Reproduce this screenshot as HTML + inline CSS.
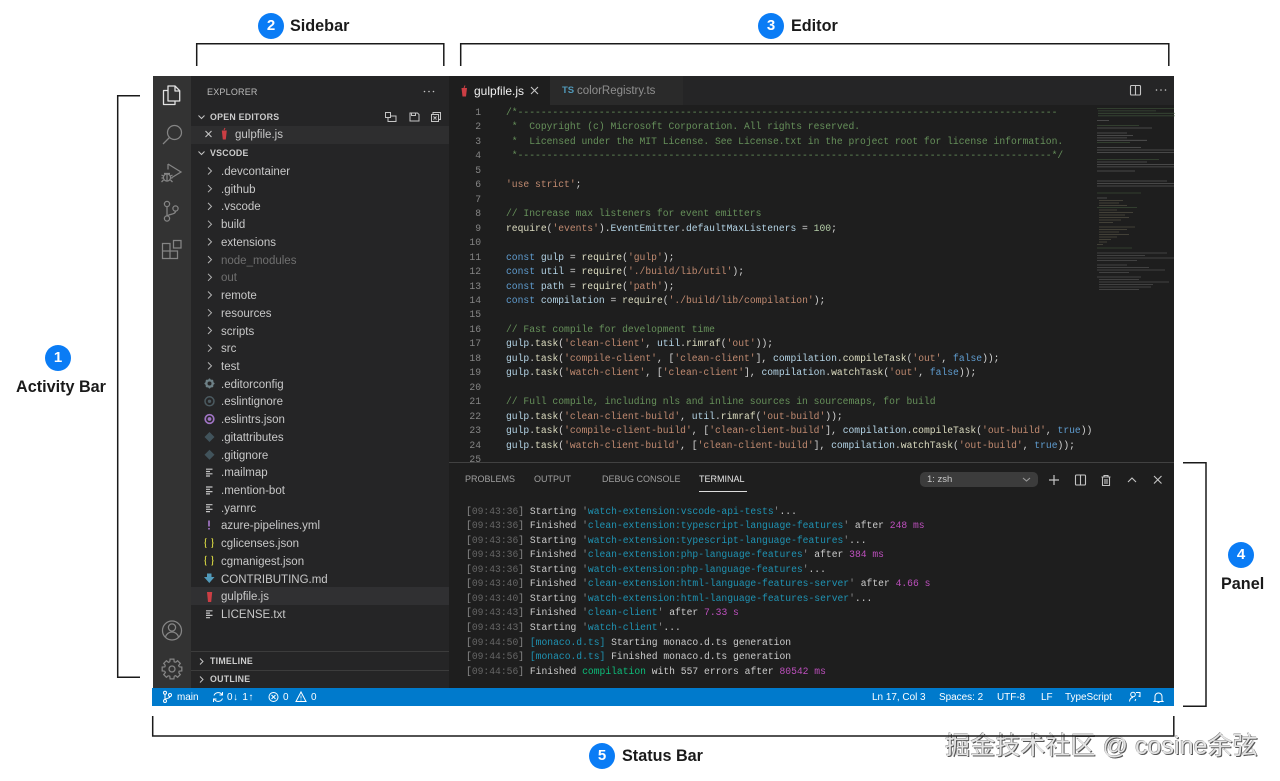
<!DOCTYPE html>
<html><head><meta charset="utf-8"><title>VS Code UI</title>
<style>
html,body{margin:0;padding:0;background:#fff;width:1280px;height:781px;overflow:hidden}
body{position:relative;font-family:"Liberation Sans","Noto Sans CJK SC",sans-serif}
div{position:absolute;box-sizing:border-box}
.t{white-space:pre;height:18px;line-height:18px}
.f{font-size:11.5px;color:#c8c8c8;left:221px;margin-top:1px}
.h{font-size:8.8px;font-weight:bold;color:#ccc;left:210px;letter-spacing:.25px}
.p{font-size:9px;color:#a0a0a0;top:470px}
.s{font-size:9.95px;color:#fff;top:689px}
.l{font-size:16.2px;font-weight:bold;color:#1a1a1a;height:26px;line-height:26px;white-space:pre}
.n{width:26px;height:26px;border-radius:50%;background:#0a7cf5;color:#fff;font-weight:bold;font-size:15px;line-height:26px;text-align:center}
pre{margin:0;font-family:"Liberation Mono",monospace;font-size:9.68px;white-space:pre}
.c{color:#66905a}.q{color:#c08a70}.k{color:#5f9ccf}.v{color:#b4d4e6}.u{color:#dcdcc0}.m{color:#b5cea8}
.g{color:#666}.b{color:#8a8a8a}.y{color:#1f93b3}.e{color:#bc4fbc}.r{color:#0dbc79}
svg{position:absolute;left:0;top:0}
</style></head><body>

<div style="left:153px;top:76px;width:1021px;height:630px;background:#1e1e1e"></div>
<div style="left:153px;top:76px;width:38px;height:612px;background:#333"></div>
<div style="left:191px;top:76px;width:258px;height:612px;background:#252526"></div>
<div style="left:449px;top:76px;width:725px;height:29px;background:#252526"></div>
<div style="left:449px;top:76px;width:101px;height:29px;background:#1e1e1e"></div>
<div style="left:550px;top:76px;width:133px;height:29px;background:#2a2a2a"></div>
<div style="left:191px;top:126px;width:258px;height:18px;background:#2e2e2f"></div>
<div style="left:191px;top:587px;width:258px;height:18px;background:#303032"></div>
<div style="left:191px;top:651px;width:258px;height:1px;background:#3c3c3c"></div>
<div style="left:191px;top:670px;width:258px;height:1px;background:#3c3c3c"></div>
<div style="left:152px;top:688px;width:1022px;height:18px;background:#007acc"></div>

<!-- sidebar text -->
<div class="t" style="left:207px;top:83px;font-size:9px;color:#bbb;letter-spacing:.2px">EXPLORER</div>
<div class="t h" style="top:108px">OPEN EDITORS</div>
<div class="t f" style="left:235px;top:126px;margin-top:0">gulpfile.js</div>
<div class="t h" style="top:144px">VSCODE</div>
<div class="t f" style="top:162px">.devcontainer</div>
<div class="t f" style="top:179.7px">.github</div>
<div class="t f" style="top:197.4px">.vscode</div>
<div class="t f" style="top:215.2px">build</div>
<div class="t f" style="top:232.9px">extensions</div>
<div class="t f" style="top:250.6px;color:#6f6f6f">node_modules</div>
<div class="t f" style="top:268.3px;color:#6f6f6f">out</div>
<div class="t f" style="top:286px">remote</div>
<div class="t f" style="top:303.8px">resources</div>
<div class="t f" style="top:321.5px">scripts</div>
<div class="t f" style="top:339.2px">src</div>
<div class="t f" style="top:356.9px">test</div>
<div class="t f" style="top:374.6px">.editorconfig</div>
<div class="t f" style="top:392.4px">.eslintignore</div>
<div class="t f" style="top:410.1px">.eslintrs.json</div>
<div class="t f" style="top:427.8px">.gitattributes</div>
<div class="t f" style="top:445.5px">.gitignore</div>
<div class="t f" style="top:463.2px">.mailmap</div>
<div class="t f" style="top:481px">.mention-bot</div>
<div class="t f" style="top:498.7px">.yarnrc</div>
<div class="t f" style="top:516.4px">azure-pipelines.yml</div>
<div class="t f" style="top:534.1px">cglicenses.json</div>
<div class="t f" style="top:551.8px">cgmanigest.json</div>
<div class="t f" style="top:569.6px">CONTRIBUTING.md</div>
<div class="t f" style="top:587.3px">gulpfile.js</div>
<div class="t f" style="top:605px">LICENSE.txt</div>
<div class="t h" style="top:652px">TIMELINE</div>
<div class="t h" style="top:670px">OUTLINE</div>

<!-- tabs -->
<div class="t" style="left:474px;top:82px;font-size:12px;color:#f0f0f0">gulpfile.js</div>
<div class="t" style="left:562px;top:82px;font-size:9.5px;font-weight:bold;color:#519aba">TS</div>
<div class="t" style="left:577px;top:82px;font-size:11.5px;color:#8f8f8f">colorRegistry.ts</div>

<!-- gutter -->
<pre style="position:absolute;left:450px;top:105.7px;width:31px;height:356.3px;overflow:hidden;text-align:right;color:#858585;line-height:14.48px">1
2
3
4
5
6
7
8
9
10
11
12
13
14
15
16
17
18
19
20
21
22
23
24
25</pre>

<!-- code -->
<div style="left:506px;top:105.7px;width:589px;height:356px;overflow:hidden">
<pre style="line-height:14.48px"><span class="c">/*---------------------------------------------------------------------------------------------</span>
<span class="c"> *  Copyright (c) Microsoft Corporation. All rights reserved.</span>
<span class="c"> *  Licensed under the MIT License. See License.txt in the project root for license information.</span>
<span class="c"> *--------------------------------------------------------------------------------------------*/</span>

<span class="q">'use strict'</span><span style="color:#d4d4d4">;</span>

<span class="c">// Increase max listeners for event emitters</span>
<span style="color:#d4d4d4"><span class="u">require</span>(<span class="q">'events'</span>).<span class="v">EventEmitter</span>.<span class="v">defaultMaxListeners</span> = <span class="m">100</span>;</span>

<span style="color:#d4d4d4"><span class="k">const</span> <span class="v">gulp</span> = <span class="u">require</span>(<span class="q">'gulp'</span>);</span>
<span style="color:#d4d4d4"><span class="k">const</span> <span class="v">util</span> = <span class="u">require</span>(<span class="q">'./build/lib/util'</span>);</span>
<span style="color:#d4d4d4"><span class="k">const</span> <span class="v">path</span> = <span class="u">require</span>(<span class="q">'path'</span>);</span>
<span style="color:#d4d4d4"><span class="k">const</span> <span class="v">compilation</span> = <span class="u">require</span>(<span class="q">'./build/lib/compilation'</span>);</span>

<span class="c">// Fast compile for development time</span>
<span style="color:#d4d4d4"><span class="v">gulp</span>.<span class="u">task</span>(<span class="q">'clean-client'</span>, <span class="v">util</span>.<span class="u">rimraf</span>(<span class="q">'out'</span>));</span>
<span style="color:#d4d4d4"><span class="v">gulp</span>.<span class="u">task</span>(<span class="q">'compile-client'</span>, [<span class="q">'clean-client'</span>], <span class="v">compilation</span>.<span class="u">compileTask</span>(<span class="q">'out'</span>, <span class="k">false</span>));</span>
<span style="color:#d4d4d4"><span class="v">gulp</span>.<span class="u">task</span>(<span class="q">'watch-client'</span>, [<span class="q">'clean-client'</span>], <span class="v">compilation</span>.<span class="u">watchTask</span>(<span class="q">'out'</span>, <span class="k">false</span>));</span>

<span class="c">// Full compile, including nls and inline sources in sourcemaps, for build</span>
<span style="color:#d4d4d4"><span class="v">gulp</span>.<span class="u">task</span>(<span class="q">'clean-client-build'</span>, <span class="v">util</span>.<span class="u">rimraf</span>(<span class="q">'out-build'</span>));</span>
<span style="color:#d4d4d4"><span class="v">gulp</span>.<span class="u">task</span>(<span class="q">'compile-client-build'</span>, [<span class="q">'clean-client-build'</span>], <span class="v">compilation</span>.<span class="u">compileTask</span>(<span class="q">'out-build'</span>, <span class="k">true</span>))</span>
<span style="color:#d4d4d4"><span class="v">gulp</span>.<span class="u">task</span>(<span class="q">'watch-client-build'</span>, [<span class="q">'clean-client-build'</span>], <span class="v">compilation</span>.<span class="u">watchTask</span>(<span class="q">'out-build'</span>, <span class="k">true</span>));</span></pre>
</div>

<!-- panel -->
<div style="left:449px;top:462px;width:725px;height:226px;background:#1e1e1e;border-top:1px solid #414141"></div>
<div class="t p" style="left:465px">PROBLEMS</div>
<div class="t p" style="left:534px">OUTPUT</div>
<div class="t p" style="left:602px">DEBUG CONSOLE</div>
<div class="t p" style="left:699px;color:#e7e7e7">TERMINAL</div>
<div style="left:699px;top:491px;width:48px;height:1px;background:#ddd"></div>
<div style="left:920px;top:472px;width:118px;height:15px;border-radius:5px;background:#3c3c3c"></div>
<div class="t" style="left:927px;top:470.5px;font-size:9.5px;color:#c8c8c8">1: zsh</div>

<pre style="position:absolute;left:466px;top:504.6px;color:#ccc;line-height:14.55px"><span class="b">[<span class="g">09:43:36</span>]</span> Starting <span class="b">'</span><span class="y">watch-extension:vscode-api-tests</span><span class="b">'</span>...
<span class="b">[<span class="g">09:43:36</span>]</span> Finished <span class="b">'</span><span class="y">clean-extension:typescript-language-features</span><span class="b">'</span> after <span class="e">248 ms</span>
<span class="b">[<span class="g">09:43:36</span>]</span> Starting <span class="b">'</span><span class="y">watch-extension:typescript-language-features</span><span class="b">'</span>...
<span class="b">[<span class="g">09:43:36</span>]</span> Finished <span class="b">'</span><span class="y">clean-extension:php-language-features</span><span class="b">'</span> after <span class="e">384 ms</span>
<span class="b">[<span class="g">09:43:36</span>]</span> Starting <span class="b">'</span><span class="y">watch-extension:php-language-features</span><span class="b">'</span>...
<span class="b">[<span class="g">09:43:40</span>]</span> Finished <span class="b">'</span><span class="y">clean-extension:html-language-features-server</span><span class="b">'</span> after <span class="e">4.66 s</span>
<span class="b">[<span class="g">09:43:40</span>]</span> Starting <span class="b">'</span><span class="y">watch-extension:html-language-features-server</span><span class="b">'</span>...
<span class="b">[<span class="g">09:43:43</span>]</span> Finished <span class="b">'</span><span class="y">clean-client</span><span class="b">'</span> after <span class="e">7.33 s</span>
<span class="b">[<span class="g">09:43:43</span>]</span> Starting <span class="b">'</span><span class="y">watch-client</span><span class="b">'</span>...
<span class="b">[<span class="g">09:44:50</span>]</span> <span class="y">[monaco.d.ts]</span> Starting monaco.d.ts generation
<span class="b">[<span class="g">09:44:56</span>]</span> <span class="y">[monaco.d.ts]</span> Finished monaco.d.ts generation
<span class="b">[<span class="g">09:44:56</span>]</span> Finished <span class="r">compilation</span> with 557 errors after <span class="e">80542 ms</span></pre>

<!-- status -->
<div class="t s" style="left:177px">main</div>
<div class="t s" style="left:227px;letter-spacing:.7px">0↓ 1↑</div>
<div class="t s" style="left:283px">0</div>
<div class="t s" style="left:311px">0</div>
<div class="t s" style="left:872px">Ln 17, Col 3</div>
<div class="t s" style="left:939px">Spaces: 2</div>
<div class="t s" style="left:997px">UTF-8</div>
<div class="t s" style="left:1041px">LF</div>
<div class="t s" style="left:1065px">TypeScript</div>

<!-- annotations -->
<div class="n" style="left:258px;top:13px">2</div>
<div class="l" style="left:290px;top:13px">Sidebar</div>
<div class="n" style="left:758px;top:13px">3</div>
<div class="l" style="left:791px;top:13px">Editor</div>
<div class="n" style="left:45px;top:345px">1</div>
<div class="l" style="left:16px;top:374px">Activity Bar</div>
<div class="n" style="left:1228px;top:542px">4</div>
<div class="l" style="left:1221px;top:571px">Panel</div>
<div class="n" style="left:589px;top:743px">5</div>
<div class="l" style="left:622px;top:743px">Status Bar</div>
<div class="t" style="left:945px;top:729px;height:34px;line-height:34px;font-size:25.1px;color:#e4e4e4;text-shadow:1px 1px 0 #555,-.5px -.5px 0 #888">掘金技术社区 @ cosine余弦</div>

<svg width="1280" height="781" viewBox="0 0 1280 781" fill="none">
<!-- minimap -->
<rect x="1095" y="105" width="79" height="357" fill="#1e1e1e"/>
<g stroke-width=".8" opacity=".6">
<path stroke="#4c6746" d="M1097 108.500h77M1098 110.900h58M1098 113.300h77M1098 115.800h77M1097 125.500h42M1097 142.500h33M1097 159.500h62M1097 193h44M1097 207.500h40M1097 248h35"/>
<path stroke="#7c7c7c" d="M1097 120.500h12M1097 128h55M1097 133h30M1097 135.500h36M1097 137.900h30M1097 140.300h50M1097 147.500h44M1097 150h77M1097 152.400h77M1097 162h50M1097 164.400h77M1097 166.900h77M1097 171h38M1097 181h70M1097 183.500h77M1097 186h77M1097 198h10"/>
<path stroke="#6f6a55" d="M1099 200.500h24M1099 203h20M1099 205.500h28M1099 210h18M1099 212.500h34M1099 215h26M1099 217.500h30M1099 220h22M1099 222.500h14M1099 227h36M1099 229.500h28M1099 232h20M1099 234.500h30M1099 237h18M1099 239.500h12M1099 242h8M1097 244.500h6"/>
<path stroke="#6c6c6c" d="M1097 253h70M1097 255.500h48M1097 258h77M1097 260.500h40M1097 265h30M1097 267.500h52M1097 270h68M1099 272.500h30M1097 277h44M1099 279.500h40M1099 282h70M1099 284.500h54M1099 287h52M1099 289.500h40"/>
</g>

<!-- activity icons -->
<g stroke="#e2e2e2" stroke-width="1.300" stroke-linejoin="round">
<path d="M168 86h7l4.700 4.700V101h-11.700z"/><path d="M175 86v5h4.700"/><path d="M168 90.500h-4.500v14h11.500v-3.500"/>
</g>
<g stroke="#858585" stroke-width="1.250">
<circle cx="174.500" cy="132.500" r="7"/><path d="M169.500 137.500L163 144"/>
<path d="M168 164v5.500M168 164l13 8-9 5.500"/>
<circle cx="167" cy="177.500" r="3.600"/><path d="M164 173.500l6 0M161.500 175l2 1M161.500 178h2M161.500 182l2-2M172.500 175l-2 1M172.500 178h-2M172.500 182l-2-2M167 174v7"/>
<circle cx="167" cy="204" r="2.600"/><circle cx="167" cy="218.500" r="2.600"/><circle cx="175.500" cy="208.500" r="2.600"/>
<path d="M167 206.600v9.300M175.500 211.100c0 3.500-6 2.800-8.500 5"/>
<path d="M162.500 243.500h7.500v7.500h7.500v7.500h-15zM162.500 251H170v7.500"/><rect x="173.500" y="240.500" width="7.500" height="7.500"/>
<circle cx="172" cy="630.500" r="9.500"/><circle cx="172" cy="627.500" r="3.600"/><path d="M165.500 637c.8-3 3.500-5 6.500-5s5.700 2 6.500 5"/>
<circle cx="172" cy="669" r="3"/>
<g transform="translate(172 669)">
<path d="M7.170-2.190L9.820-1.910V1.910L7.170 2.190A7.500 7.500 0 0 1 6.620 3.520"/>
<path transform="rotate(45)" d="M7.170-2.190L9.820-1.910V1.910L7.170 2.190A7.500 7.500 0 0 1 6.620 3.520"/>
<path transform="rotate(90)" d="M7.170-2.190L9.820-1.910V1.910L7.170 2.190A7.500 7.500 0 0 1 6.620 3.520"/>
<path transform="rotate(135)" d="M7.170-2.190L9.820-1.910V1.910L7.170 2.190A7.500 7.500 0 0 1 6.620 3.520"/>
<path transform="rotate(180)" d="M7.170-2.190L9.820-1.910V1.910L7.170 2.190A7.500 7.500 0 0 1 6.620 3.520"/>
<path transform="rotate(225)" d="M7.170-2.190L9.820-1.910V1.910L7.170 2.190A7.500 7.500 0 0 1 6.620 3.520"/>
<path transform="rotate(270)" d="M7.170-2.190L9.820-1.910V1.910L7.170 2.190A7.500 7.500 0 0 1 6.620 3.520"/>
<path transform="rotate(315)" d="M7.170-2.190L9.820-1.910V1.910L7.170 2.190A7.500 7.500 0 0 1 6.620 3.520"/>
</g>
</g>

<!-- sidebar small icons -->
<g fill="#c5c5c5"><circle cx="424.500" cy="91.500" r=".8"/><circle cx="429" cy="91.500" r=".8"/><circle cx="433.500" cy="91.500" r=".8"/></g>
<g stroke="#c5c5c5" stroke-width="1">
<path d="M198.500 115.500l3 3 3-3M198.500 151.500l3 3 3-3"/>
<path d="M200 658.500l3 3-3 3M200 676.500l3 3-3 3"/>
<path d="M205.500 131l6 6M211.500 131l-6 6" stroke-width="1.100"/>
<path d="M385.500 112.500h5v5h-5zM388 117.500v4h8v-5.500h-5.500"/>
<path d="M410 113h7.500l1.500 1.500v6.500h-9zM411.500 113v2.500h4V113"/>
<path d="M433 114v-1.500h7.500v7H439M431.500 114.500h7v7h-7zM433.500 116.500l3 3M436.500 116.500l-3 3"/>
</g>
<g stroke="#b4b4b4" stroke-width="1">
<path d="M208 167.500l3.500 3.500-3.500 3.500M208 185.200l3.500 3.500-3.500 3.500M208 202.900l3.500 3.500-3.500 3.500M208 220.700l3.500 3.500-3.500 3.500M208 238.400l3.500 3.500-3.500 3.500M208 256.100l3.500 3.500-3.500 3.500M208 273.800l3.500 3.500-3.500 3.500M208 291.500l3.500 3.500-3.500 3.500M208 309.300l3.500 3.500-3.500 3.500M208 327l3.500 3.500-3.500 3.500M208 344.700l3.500 3.500-3.500 3.500M208 362.400l3.500 3.500-3.500 3.500"/>
</g>

<!-- file icons -->
<g fill="#cc3e44">
<path d="M221.800 130.500h5l-1 9h-3z"/><path d="M207 592h5.200l-1 10h-3.200z"/><path d="M461.500 88h5.500l-1 8.500h-3.500z"/>
</g>
<path d="M224 130l1-2M464 88l1-2.500" stroke="#cc3e44"/>
<circle cx="209.500" cy="383.500" r="3.200" stroke="#6d8086" stroke-width="2.400"/>
<path d="M209.500 378.500v1.500M209.500 387v1.500M204.500 383.500h1.500M213 383.500h1.500M206 380l1 1M212 386l1 1M206 387l1-1M212 381l1-1" stroke="#6d8086" stroke-width="1.300"/>
<circle cx="209.500" cy="401.300" r="4.500" stroke="#4b5a60" stroke-width="1.500"/><circle cx="209.500" cy="401.300" r="1.700" fill="#4b5a60"/>
<circle cx="209.500" cy="419" r="4.300" stroke="#a074c4" stroke-width="1.700"/><circle cx="209.500" cy="419" r="1.900" fill="#a074c4"/>
<path d="M209.500 432l5 5-5 5-5-5z" fill="#41535b"/><path d="M209.500 449.700l5 5-5 5-5-5z" fill="#41535b"/>
<g stroke="#c5c5c5" stroke-width="1.200">
<path d="M206 469.200h6.500M206 471.500h4M206 473.800h6.500M206 476h4"/>
<path d="M206 487h6.500M206 489.300h4M206 491.600h6.500M206 493.900h4"/>
<path d="M206 504.700h6.500M206 507h4M206 509.300h6.500M206 511.600h4"/>
<path d="M206 610.800h6.500M206 613.100h4M206 615.400h6.500M206 617.700h4"/>
</g>
<path d="M209 520.500v6M209 528v1.500" stroke="#a074c4" stroke-width="1.700"/>
<g stroke="#cbcb41" stroke-width="1.100">
<path d="M206.500 538.500c-1.500 0-1 1.200-1 2.500s-.3 2-1 2c.7 0 1 .7 1 2s-.5 2.500 1 2.500M211.500 538.500c1.500 0 1 1.200 1 2.500s.3 2 1 2c-.7 0-1 .7-1 2s.5 2.500-1 2.500"/>
<path d="M206.500 556.200c-1.500 0-1 1.200-1 2.500s-.3 2-1 2c.7 0 1 .7 1 2s-.5 2.500 1 2.500M211.500 556.200c1.500 0 1 1.200 1 2.500s.3 2 1 2c-.7 0-1 .7-1 2s.5 2.500-1 2.500"/>
</g>
<path d="M207 573.500h4.500v3.500h3l-5.200 6-5.300-6h3z" fill="#519aba"/>

<!-- tab / editor icons -->
<g stroke="#c5c5c5" stroke-width="1.100">
<path d="M531 87l7 7M538 87l-7 7"/>
<rect x="1130.500" y="85.500" width="10" height="9.500" rx="1"/><path d="M1135.500 85.500v9.500"/>
</g>
<g fill="#c5c5c5"><circle cx="1156.500" cy="90" r=".8"/><circle cx="1161" cy="90" r=".8"/><circle cx="1165.500" cy="90" r=".8"/></g>

<!-- panel icons -->
<g stroke="#c5c5c5" stroke-width="1.100">
<path d="M1023 478l3.500 3 3.500-3" stroke="#999"/>
<path d="M1054 475v10M1049 480h10" stroke-width="1.200"/>
<rect x="1075.500" y="475" width="10" height="10" rx="1"/><path d="M1080.500 475v10"/>
<path d="M1101.500 477h9M1104 477v-1.500h4v1.500M1102.500 477v8.500h7V477M1105 479v5M1107 479v5"/>
<path d="M1128 482l4-4 4 4"/>
<path d="M1154 476l7.500 7.500M1161.500 476l-7.500 7.500"/>
</g>

<!-- status icons -->
<g stroke="#fff" stroke-width="1">
<circle cx="165" cy="692.800" r="1.500"/><circle cx="165" cy="701" r="1.500"/><circle cx="170" cy="695" r="1.500"/>
<path d="M165 694.300v5.200M170 696.500c0 2-3.500 1.500-5 3"/>
<path d="M214 695.500a4.600 4.600 0 0 1 8-1M222.500 698.500a4.600 4.600 0 0 1-8 1M222.500 692v3h-3M213.500 702v-3h3"/>
<circle cx="273.500" cy="697" r="4.500"/><path d="M271.500 695l4 4M275.500 695l-4 4"/>
<path d="M301 692l5 9.500h-10z"/><path d="M301 695.500v3M301 699.500v1" stroke-width=".8"/>
<circle cx="1133" cy="694.500" r="2.300"/><path d="M1129.500 701.500c.3-2.500 1.700-4 3.500-4M1136 692.500h4v4l-1.500-.5M1135 701l.8-2"/>
<path d="M1155 700.500v-4a3.500 3.500 0 0 1 7 0v4l1 1h-9zM1157.500 702.500h2"/>
</g>

<!-- brackets -->
<g stroke="#1a1a1a" stroke-width="1.500">
<path d="M196.700 66V43.700H443.800V66"/>
<path d="M460.700 66V43.700H1168.800V66"/>
<path d="M140 95.700H117.700V677.300H140"/>
<path d="M1183 462.700H1206V706.300H1183"/>
<path d="M152.700 716V736H1173.800V716"/>
</g>
</svg>
</body></html>
